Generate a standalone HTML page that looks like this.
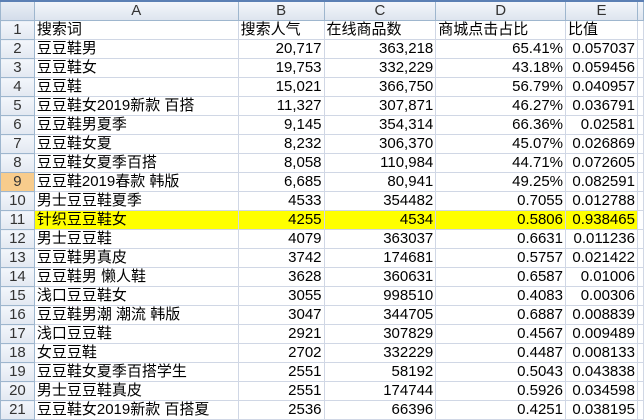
<!DOCTYPE html><html><head><meta charset="utf-8"><style>
body{margin:0;width:644px;height:419px;overflow:hidden;background:#fff;font-family:"Liberation Sans","Noto Sans CJK SC",sans-serif}
table{border-collapse:collapse;table-layout:fixed;position:absolute;left:0;top:0}
td{height:18px;padding:0 2px;border:1px solid #d0d7e5;font-size:15px;white-space:nowrap;overflow:hidden;line-height:18px;color:#000}
td.n{text-align:right}
tr.h td{height:19px;background:linear-gradient(#f3f6fb,#dde4ee);color:#333;text-align:center;border-color:#9eb6ce;font-size:15px}
td.r{background:linear-gradient(#f3f6fb,#e2e8f1);color:#333;text-align:center;border-color:#9eb6ce;padding:0}
td.sel{background:#f8cc8c;}
tr.y td:not(.r){background:#ffff00}
.top{position:absolute;left:0;top:0;width:644px;height:2px;background:#5b7fb4;z-index:2}
</style></head><body>
<div class="top"></div>
<table>
<colgroup><col style="width:34px"><col style="width:204px"><col style="width:86px"><col style="width:112px"><col style="width:130px"><col style="width:72px"><col style="width:6px"></colgroup>
<tr class="h"><td style="background:linear-gradient(#e9eef5,#d3dcea)"></td><td>A</td><td>B</td><td>C</td><td>D</td><td>E</td><td></td></tr>
<tr><td class="r">1</td><td>搜索词</td><td>搜索人气</td><td>在线商品数</td><td>商城点击占比</td><td>比值</td><td></td></tr>
<tr><td class="r">2</td><td>豆豆鞋男</td><td class="n">20,717</td><td class="n">363,218</td><td class="n">65.41%</td><td class="n">0.057037</td><td></td></tr>
<tr><td class="r">3</td><td>豆豆鞋女</td><td class="n">19,753</td><td class="n">332,229</td><td class="n">43.18%</td><td class="n">0.059456</td><td></td></tr>
<tr><td class="r">4</td><td>豆豆鞋</td><td class="n">15,021</td><td class="n">366,750</td><td class="n">56.79%</td><td class="n">0.040957</td><td></td></tr>
<tr><td class="r">5</td><td>豆豆鞋女2019新款 百搭</td><td class="n">11,327</td><td class="n">307,871</td><td class="n">46.27%</td><td class="n">0.036791</td><td></td></tr>
<tr><td class="r">6</td><td>豆豆鞋男夏季</td><td class="n">9,145</td><td class="n">354,314</td><td class="n">66.36%</td><td class="n">0.02581</td><td></td></tr>
<tr><td class="r">7</td><td>豆豆鞋女夏</td><td class="n">8,232</td><td class="n">306,370</td><td class="n">45.07%</td><td class="n">0.026869</td><td></td></tr>
<tr><td class="r">8</td><td>豆豆鞋女夏季百搭</td><td class="n">8,058</td><td class="n">110,984</td><td class="n">44.71%</td><td class="n">0.072605</td><td></td></tr>
<tr><td class="r sel">9</td><td>豆豆鞋2019春款 韩版</td><td class="n">6,685</td><td class="n">80,941</td><td class="n">49.25%</td><td class="n">0.082591</td><td></td></tr>
<tr><td class="r">10</td><td>男士豆豆鞋夏季</td><td class="n">4533</td><td class="n">354482</td><td class="n">0.7055</td><td class="n">0.012788</td><td></td></tr>
<tr class="y"><td class="r">11</td><td>针织豆豆鞋女</td><td class="n">4255</td><td class="n">4534</td><td class="n">0.5806</td><td class="n">0.938465</td><td style="background:#fff"></td></tr>
<tr><td class="r">12</td><td>男士豆豆鞋</td><td class="n">4079</td><td class="n">363037</td><td class="n">0.6631</td><td class="n">0.011236</td><td></td></tr>
<tr><td class="r">13</td><td>豆豆鞋男真皮</td><td class="n">3742</td><td class="n">174681</td><td class="n">0.5757</td><td class="n">0.021422</td><td></td></tr>
<tr><td class="r">14</td><td>豆豆鞋男 懒人鞋</td><td class="n">3628</td><td class="n">360631</td><td class="n">0.6587</td><td class="n">0.01006</td><td></td></tr>
<tr><td class="r">15</td><td>浅口豆豆鞋女</td><td class="n">3055</td><td class="n">998510</td><td class="n">0.4083</td><td class="n">0.00306</td><td></td></tr>
<tr><td class="r">16</td><td>豆豆鞋男潮 潮流 韩版</td><td class="n">3047</td><td class="n">344705</td><td class="n">0.6887</td><td class="n">0.008839</td><td></td></tr>
<tr><td class="r">17</td><td>浅口豆豆鞋</td><td class="n">2921</td><td class="n">307829</td><td class="n">0.4567</td><td class="n">0.009489</td><td></td></tr>
<tr><td class="r">18</td><td>女豆豆鞋</td><td class="n">2702</td><td class="n">332229</td><td class="n">0.4487</td><td class="n">0.008133</td><td></td></tr>
<tr><td class="r">19</td><td>豆豆鞋女夏季百搭学生</td><td class="n">2551</td><td class="n">58192</td><td class="n">0.5043</td><td class="n">0.043838</td><td></td></tr>
<tr><td class="r">20</td><td>男士豆豆鞋真皮</td><td class="n">2551</td><td class="n">174744</td><td class="n">0.5926</td><td class="n">0.034598</td><td></td></tr>
<tr><td class="r">21</td><td>豆豆鞋女2019新款 百搭夏</td><td class="n">2536</td><td class="n">66396</td><td class="n">0.4251</td><td class="n">0.038195</td><td></td></tr>
</table>
</body></html>
